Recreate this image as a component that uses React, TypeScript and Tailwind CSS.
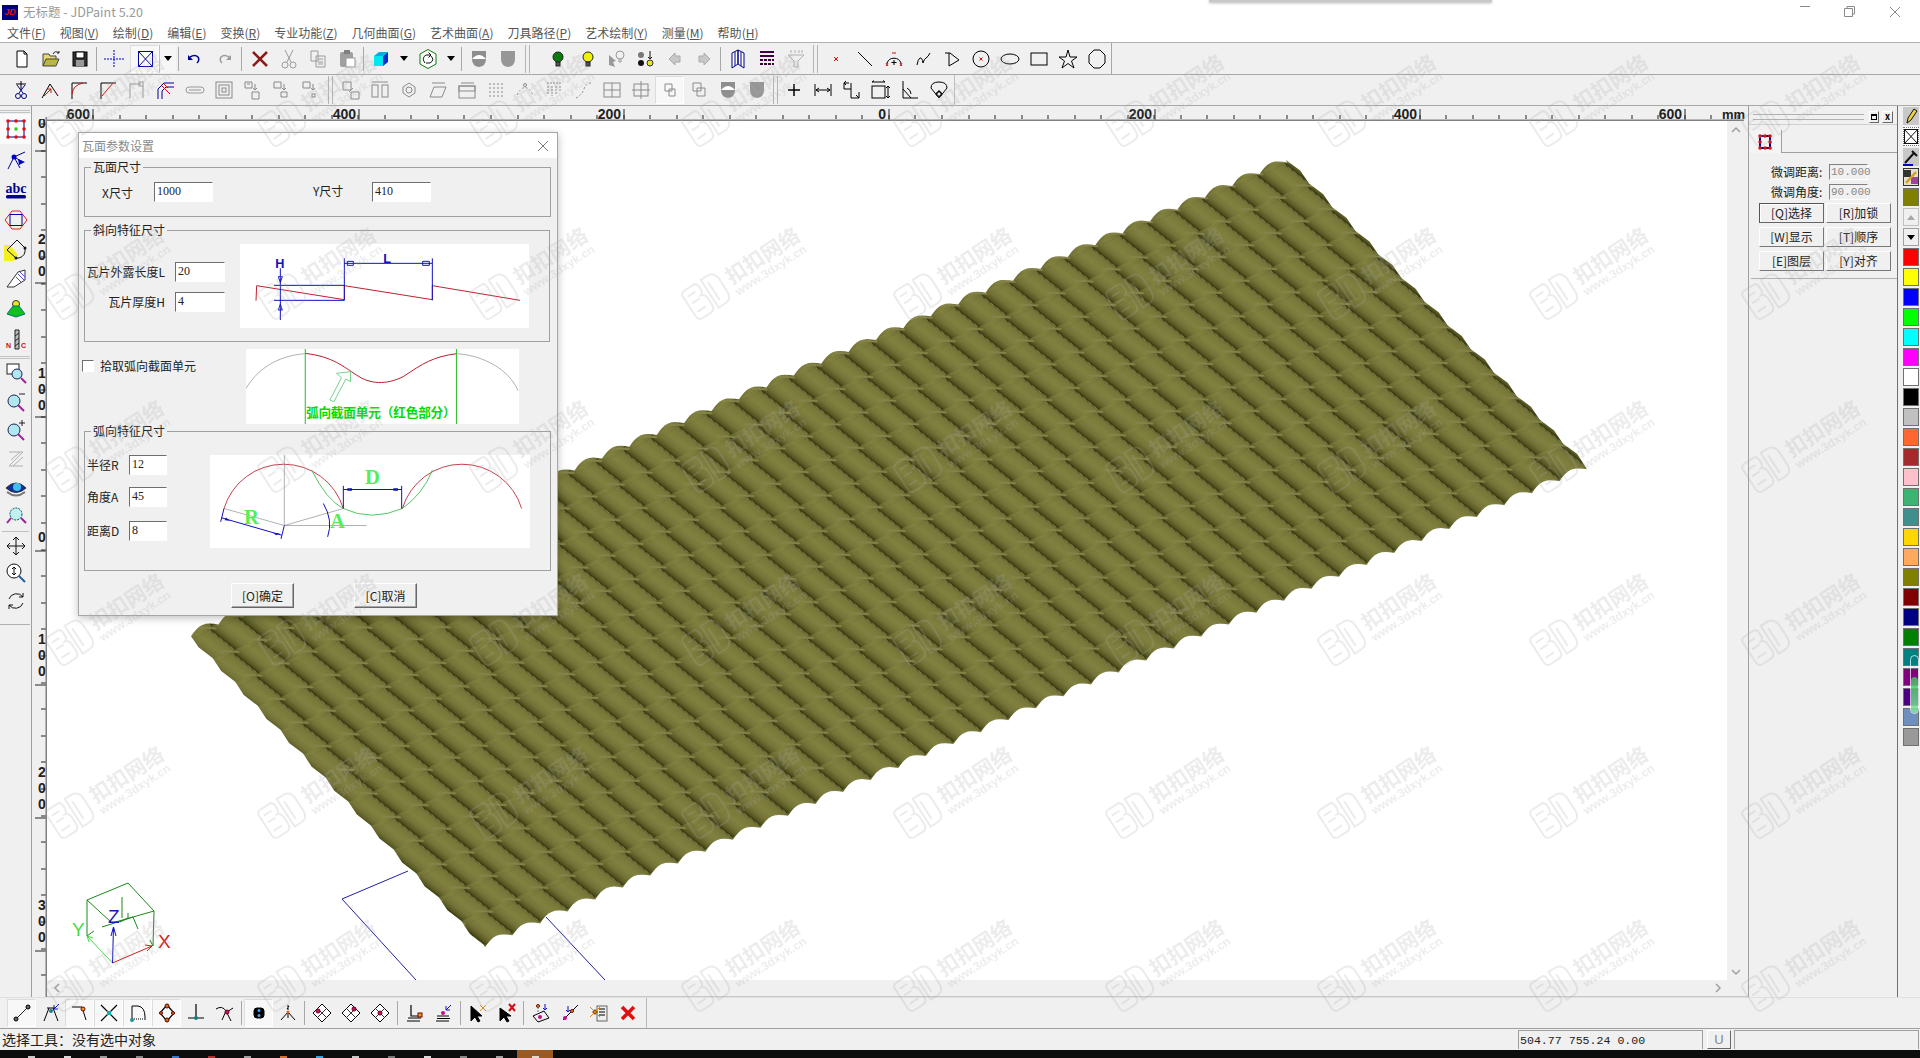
import type { ReactNode } from "react";

const cjk = "[font-family:'Noto_Sans_CJK_SC','Liberation_Sans',sans-serif]";

// ---------- helpers for toolbars ----------
const Ic = ({ children }: { children: ReactNode }) => (
  <svg width={20} height={20} viewBox="0 0 20 20" fill="none" stroke="#000" strokeWidth={1}>
    {children}
  </svg>
);

const T = ({ children, on, className = "" }: { children?: ReactNode; on?: boolean; className?: string }) => (
  <div
    className={`flex h-[28px] w-[29px] shrink-0 items-center justify-center ${
      on ? "border border-[#dcdcdc] border-r-white border-b-white bg-[#f8f8f8]" : ""
    } ${className}`}
  >
    <Ic>{children}</Ic>
  </div>
);

const Sep = ({ className = "mx-[2px]" }: { className?: string }) => (
  <div className={`h-[24px] w-px shrink-0 bg-[#a8a8a8] ${className}`} />
);

const Grip = ({ className = "w-[10px]" }: { className?: string }) => (
  <div className={`flex h-[28px] shrink-0 justify-center gap-[3px] ${className}`}>
    <div className="h-full w-px bg-[#b4b4b4]" />
    <div className="h-full w-px bg-[#b4b4b4]" />
  </div>
);

const Drop = ({ pressed }: { pressed?: boolean }) => (
  <div
    className={`flex h-[28px] w-[17px] shrink-0 items-center justify-center ${
      pressed ? "border-l border-[#c0c0c0] bg-[#f6f6f6]" : ""
    }`}
  >
    <div className="h-0 w-0 border-x-[4px] border-t-[5px] border-x-transparent border-t-black" />
  </div>
);

// ---------- icons ----------
const grey = "#9a9a9a";

const Bulb = ({ c }: { c: string }) => (
  <>
    <circle cx="10" cy="8" r="5" fill={c} stroke="#222" />
    <rect x="8" y="13" width="4" height="4" fill="#555" stroke="#222" />
  </>
);

const Diamond = ({ x, y }: { x: number; y: number }) => (
  <>
    <path d="M10 1L19 10L10 19L1 10Z" fill="#fff" />
    <path d="M5 5L15 15M15 5L5 15" stroke="#333" />
    <circle cx={x} cy={y} r="2" fill="#c0108a" stroke="#700" />
  </>
);

// ---------- tile surface geometry ----------
const TC = [1286, 160];
const RC = [1586, 467];
const BC = [484, 945];
const LC = [190, 634];
const WAVES = 40;
const ROWS = 13;

const longEdge = (a: number[], b: number[]) => {
  const out: string[] = [];
  const steps = WAVES * 8;
  for (let i = 0; i <= steps; i++) {
    const t = i / steps;
    const off = 2.5 - 6 * Math.abs(Math.sin(Math.PI * t * WAVES));
    out.push(`${(a[0] + (b[0] - a[0]) * t + off * 0.4).toFixed(1)} ${(a[1] + (b[1] - a[1]) * t + off * 0.92).toFixed(1)}`);
  }
  return out;
};

const shortEdge = (a: number[], b: number[], dir: number) => {
  const out: string[] = [];
  for (let i = 0; i < ROWS * 2; i++) {
    const t = i / (ROWS * 2);
    const off = i % 2 === 0 ? 0 : 3 * dir;
    out.push(`${(a[0] + (b[0] - a[0]) * t + off * 0.9).toFixed(1)} ${(a[1] + (b[1] - a[1]) * t - off * 0.4).toFixed(1)}`);
  }
  return out;
};

const tilePath =
  "M" + [...shortEdge(TC, RC, 1), ...longEdge(RC, BC), ...shortEdge(BC, LC, -1), ...longEdge(LC, TC)].join("L") + "Z";

const u = [(BC[0] - RC[0]) / WAVES, (BC[1] - RC[1]) / WAVES];
const v = [(RC[0] - TC[0]) / ROWS, (RC[1] - TC[1]) / ROWS];

const dashes = [-100, 0, 100]
  .flatMap((ox) => [0, 100].map((oy) => `M${38 + ox} ${oy - 13}L${-6 + ox} ${oy + 13}`))
  .join("");

const TileCanvas = () => (
  <svg className="absolute inset-0" width={1680} height={859} viewBox="47 121 1680 859">
    <defs>
      <linearGradient id="tileAcross" x1="0" y1="0" x2="1" y2="0">
        <stop offset="0" stopColor="#5c5c26" />
        <stop offset="0.07" stopColor="#767639" />
        <stop offset="0.42" stopColor="#81813f" />
        <stop offset="0.68" stopColor="#74743a" />
        <stop offset="0.88" stopColor="#585822" />
        <stop offset="1" stopColor="#30300c" />
      </linearGradient>
      <pattern
        id="tile"
        patternUnits="userSpaceOnUse"
        width="100"
        height="100"
        patternTransform={`matrix(${u[0] / 100} ${u[1] / 100} ${v[0] / 100} ${v[1] / 100} ${TC[0]} ${TC[1]})`}
      >
        <g transform="matrix(1 0 -0.16 1 16 0)">
          <rect x="-100" width="100" height="100" fill="url(#tileAcross)" />
          <rect x="0" width="100" height="100" fill="url(#tileAcross)" />
          <rect x="100" width="100" height="100" fill="url(#tileAcross)" />
        </g>
        <path d="M10 6Q55 22 100 8" stroke="#5e5e2a" strokeOpacity="0.25" strokeWidth="3" fill="none" />
        <path d={dashes} stroke="#84844a" strokeWidth="8" fill="none" />
      </pattern>
    </defs>
    <path d="M408 871L342 899L416 980M546 917L605 980" stroke="#2020a0" fill="none" />
    <path d={tilePath} fill="url(#tile)" />
    {/* axis widget */}
    <g fill="none" stroke="#1a8a1a">
      <path d="M128 883L87 900L112 923L154 911Z" />
      <path d="M87 900L87 936M154 911L153 946M122 897L122 918M128 913L128 918L120 922M102 927L133 917L138 929M150 940L153 946M87 936L94 931" />
    </g>
    <path d="M112.5 963L87 936M87 936L93 938M87 936L89 942" stroke="#44dd44" fill="none" />
    <path d="M112.5 963L152 946M152 946L145 945M152 946L147 951" stroke="#d01818" fill="none" />
    <path d="M112.5 963L113.5 927M113.5 927L111 936M113.5 927L116 936" stroke="#1010c0" fill="none" />
    <text x="108" y="923" fontSize="19" fill="#1818b0" fontFamily="Liberation Sans">Z</text>
    <text x="72" y="936" fontSize="19" fill="#44dd44" fontFamily="Liberation Sans">Y</text>
    <text x="158" y="948" fontSize="19" fill="#d82020" fontFamily="Liberation Sans">X</text>
  </svg>
);

// ---------- dialog widgets ----------
const Field = ({ value, w }: { value: string; w: string }) => (
  <div
    className={`flex h-[20px] shrink-0 items-start border border-t-[#6e6e6e] border-l-[#6e6e6e] border-r-white border-b-white bg-white pl-[2px] text-[12px] leading-[16px] text-[#222] [font-family:'Liberation_Serif',serif] ${w}`}
  >
    {value}
  </div>
);

const Group = ({ title, className, children }: { title: string; className: string; children: ReactNode }) => (
  <div className={`relative ml-[5px] border border-[#a0a0a0] ${className}`}>
    <span className="absolute -top-[9px] left-[6px] bg-[#f0f0f0] px-[2px] text-[12px] leading-[16px] text-[#222]">{title}</span>
    {children}
  </div>
);

const DlgButton = ({ label }: { label: string }) => (
  <div className="flex h-[25px] w-[63px] items-center justify-center border border-t-white border-l-white border-r-[#666] border-b-[#666] text-[12px] text-[#222] shadow-[inset_-1px_-1px_0_#a8a8a8]">
    {label}
  </div>
);

const Dialog = () => (
  <div className={`absolute left-[31px] top-[11px] flex h-[484px] w-[480px] flex-col border border-[#a6a6a6] bg-[#f0f0f0] shadow-[0_2px_8px_rgba(0,0,0,0.25)] ${cjk}`}>
    <div className="flex h-[25px] shrink-0 items-center justify-between bg-white pl-[3px] pr-[8px]">
      <span className="text-[12px] text-[#8a8a8a]">瓦面参数设置</span>
      <svg width={12} height={12} viewBox="0 0 12 12" stroke="#777" fill="none">
        <path d="M1 1L11 11M11 1L1 11" />
      </svg>
    </div>
    <Group title="瓦面尺寸" className="mt-[9px] h-[50px] w-[467px]">
      <div className="flex pt-[14px] text-[12px] text-[#222]">
        <span className="box-content w-[52px] pl-[17px] leading-[22px]">X尺寸</span>
        <Field value="1000" w="w-[59px]" />
        <span className="ml-[100px] w-[59px] leading-[18px]">Y尺寸</span>
        <Field value="410" w="w-[59px]" />
      </div>
    </Group>
    <Group title="斜向特征尺寸" className="mt-[13px] h-[112px] w-[466px]">
      <div className="flex pt-[13px]">
        <div className="flex w-[155px] shrink-0 flex-col gap-[10px] pr-[15px] pt-[18px] text-[12px] text-[#222]">
          <div className="flex items-center justify-end gap-[10px]">
            瓦片外露长度L
            <Field value="20" w="w-[50px]" />
          </div>
          <div className="flex items-center justify-end gap-[10px]">
            瓦片厚度H
            <Field value="4" w="w-[50px]" />
          </div>
        </div>
        <svg className="bg-white" width={289} height={84} viewBox="510 357 867 252" fill="none">
          <path d="M558 527L560 482L823 524L823 482L1087 524L1087 482L1350 526" stroke="#c02030" strokeWidth="3" />
          <path
            d="M631 430V585M612 481H823M612 526H823M823 400V526M1087 400V526M823 415H1087"
            stroke="#1010c0"
            strokeWidth="3"
          />
          <path d="M625 455H637L631 472ZM625 555H637L631 538ZM832 409H850V421H832ZM1058 409H1078V421H1058Z" stroke="#1010c0" strokeWidth="3" />
          <text x="616" y="428" fontSize="38" fontWeight="700" fill="#1010c0" fontFamily="Liberation Sans">H</text>
          <text x="940" y="414" fontSize="38" fontWeight="700" fill="#1010c0" fontFamily="Liberation Sans">L</text>
        </svg>
      </div>
    </Group>
    <div className="ml-[3px] mt-[7px] flex h-[75px]">
      <div className="flex h-fit w-[164px] shrink-0 items-center gap-[6px] pt-[8px] text-[12px] text-[#222]">
        <div className="h-[12px] w-[12px] border border-t-[#6e6e6e] border-l-[#6e6e6e] border-r-white border-b-white bg-white" />
        拾取弧向截面单元
      </div>
      <svg className="bg-white" width={273} height={75} viewBox="528 672 820 225" fill="none">
        <path d="M528 790C570 720 640 690 706 686M1160 686C1240 690 1320 735 1345 797" stroke="#8a8a8a" strokeWidth="2" />
        <path d="M706 685C790 695 820 725 860 750C900 778 950 780 1000 755C1060 715 1090 695 1160 686" stroke="#b81c2c" strokeWidth="3" />
        <path d="M706 672V897M1160 672V897" stroke="#22bb22" strokeWidth="3" />
        <path d="M780 825L815 758L800 745L842 740L842 770L828 762L792 830Z" stroke="#33bb55" strokeWidth="2" />
        <text x="708" y="875" fontSize="38" fontWeight="700" fill="#00dd00" textLength="450" fontFamily="Noto Sans CJK SC">弧向截面单元（红色部分）</text>
      </svg>
    </div>
    <Group title="弧向特征尺寸" className="mt-[7px] h-[140px] w-[467px]">
      <div className="flex pt-[23px]">
        <div className="flex w-[125px] shrink-0 flex-col pl-[2px] text-[12px] text-[#222]">
          <div className="flex items-center">
            <span className="w-[42px]">半径R</span>
            <Field value="12" w="w-[38px]" />
          </div>
          <div className="mt-[12px] flex items-center">
            <span className="w-[42px]">角度A</span>
            <Field value="45" w="w-[38px]" />
          </div>
          <div className="mt-[14px] flex items-center">
            <span className="w-[42px]">距离D</span>
            <Field value="8" w="w-[38px]" />
          </div>
        </div>
        <svg className="bg-white" width={320} height={93} viewBox="420 105 960 278" fill="none">
          <path d="M643 105V316M643 316L462 265M643 316L820 265M643 316H890" stroke="#8a8a8a" strokeWidth="2" />
          <path d="M462 265A187 187 0 0 1 820 265M997 265A187 187 0 0 1 1355 265" stroke="#b81c2c" strokeWidth="2.5" />
          <path d="M725 150Q770 240 820 265Q905 305 997 265Q1060 220 1087 150" stroke="#33bb44" strokeWidth="2.5" />
          <path
            d="M462 265L452 305M643 316L633 356M455 293L635 345M820 197V265M995 197V265M820 208H995M760 250Q790 300 773 350"
            stroke="#1010c0"
            strokeWidth="3"
          />
          <path d="M832 204H846V212H832ZM970 204H984V212H970ZM468 292L480 302L464 300ZM610 338L630 340L618 345Z" fill="#1010c0" />
          <text x="522" y="312" fontSize="62" fontWeight="700" fill="#55ee55" fontFamily="Liberation Serif">R</text>
          <text x="885" y="192" fontSize="62" fontWeight="700" fill="#55ee55" fontFamily="Liberation Serif">D</text>
          <text x="780" y="324" fontSize="62" fontWeight="700" fill="#55ee55" fontFamily="Liberation Serif">A</text>
        </svg>
      </div>
    </Group>
    <div className="ml-[152px] mt-[12px] flex gap-[60px]">
      <DlgButton label="[O]确定" />
      <DlgButton label="[C]取消" />
    </div>
  </div>
);

// ---------- rulers ----------
const hLabels = [
  { x: 93, t: "600" },
  { x: 359, t: "400" },
  { x: 624, t: "200" },
  { x: 889, t: "0" },
  { x: 1155, t: "200" },
  { x: 1420, t: "400" },
  { x: 1685, t: "600" }
];
const hTicks = Array.from({ length: 66 }, (_, i) => 66.5 + i * 26.53);

const HRuler = () => (
  <svg className="block shrink-0" width={1701} height={15} viewBox="47 106 1701 15">
    {hTicks.map((x) => (
      <path key={x} d={`M${Math.round(x)} 115V119`} stroke="#222" />
    ))}
    {hLabels.map((l) => (
      <g key={l.x}>
        <path d={`M${l.x} 109V120`} stroke="#222" />
        <text x={l.x - 3} y="119" textAnchor="end" fontSize="14" fontWeight="700" fill="#222" fontFamily="Liberation Sans">{l.t}</text>
      </g>
    ))}
    <text x="1722" y="119" fontSize="13" fontWeight="700" fill="#222" fontFamily="Liberation Sans">mm</text>
    <path d="M47 120.5H1744" stroke="#808080" strokeWidth="2" />
  </svg>
);

const vMajors = [151, 283, 417, 551, 685, 818, 951];
const vDigits = [
  { y: 128, t: "0" },
  { y: 144, t: "0" },
  { y: 244, t: "2" },
  { y: 260, t: "0" },
  { y: 276, t: "0" },
  { y: 378, t: "1" },
  { y: 394, t: "0" },
  { y: 410, t: "0" },
  { y: 542, t: "0" },
  { y: 644, t: "1" },
  { y: 660, t: "0" },
  { y: 676, t: "0" },
  { y: 777, t: "2" },
  { y: 793, t: "0" },
  { y: 809, t: "0" },
  { y: 910, t: "3" },
  { y: 926, t: "0" },
  { y: 942, t: "0" }
];
const vTicks = Array.from({ length: 34 }, (_, i) => 124 + i * 26.6);

const VRuler = () => (
  <svg className="block shrink-0" width={15} height={891} viewBox="32 106 15 891">
    {vTicks.map((y) => (
      <path key={y} d={`M41 ${Math.round(y)}H46`} stroke="#222" />
    ))}
    {vMajors.map((y) => (
      <path key={y} d={`M35 ${y}H46`} stroke="#222" />
    ))}
    {vDigits.map((d) => (
      <text key={d.y} x="42" y={d.y} textAnchor="middle" fontSize="14" fontWeight="700" fill="#222" fontFamily="Liberation Sans">{d.t}</text>
    ))}
    {/* the topmost digit is cut off by the ruler's corner */}
    <rect x="32" y="106" width="15" height="13" fill="#f0f0f0" />
    <path d="M46.5 117V997" stroke="#808080" strokeWidth="2" />
  </svg>
);

// ---------- left toolbar ----------
const L = ({ children, h, on }: { children: ReactNode; h: string; on?: boolean }) => (
  <div className={`flex shrink-0 items-center justify-center ${h} ${on ? "bg-[#fafafa]" : ""}`}>
    <svg width={24} height={24} viewBox="0 0 24 24" fill="none" stroke="#000">
      {children}
    </svg>
  </div>
);

const LeftBar = () => (
  <div className="flex w-[32px] shrink-0 flex-col border-r border-[#a0a0a0]">
    <div className="mt-[4px] h-[3px] w-[30px] border-t border-b border-[#c4c4c4]" />
    <div className="h-[1px]" />
    <L h="h-[30px]" on>
      <rect x="4" y="4" width="16" height="16" stroke="#000080" />
      <path d="M4 4h.1M12 4h.1M20 4h.1M4 12h.1M20 12h.1M4 20h.1M12 20h.1M20 20h.1" stroke="#e01010" strokeWidth="3.5" strokeLinecap="round" />
      <rect x="10.5" y="10.5" width="3" height="3" fill="#20d020" stroke="none" />
    </L>
    <L h="h-[31px]">
      <path d="M4 21L10 9L21 4M10 9L19 14M10 9L16 20" stroke="#000090" />
      <circle cx="10" cy="9" r="2.5" fill="#0000c0" stroke="none" />
      <path d="M14 11L21 14L15 17Z" fill="#0000c0" stroke="none" />
    </L>
    <L h="h-[30px]">
      <text x="12" y="15" textAnchor="middle" fontSize="14" fontWeight="700" fill="#000090" stroke="none" fontFamily="Liberation Serif">abc</text>
      <rect x="2" y="17" width="20" height="3.5" rx="1.5" fill="#000090" stroke="none" />
    </L>
    <L h="h-[29px]">
      <path d="M8 3H16L23 12L16 21H8L1 12Z" stroke="#e02020" />
      <rect x="6" y="6.5" width="12" height="11" stroke="#0000a0" />
    </L>
    <L h="h-[29px]">
      <path d="M0 8H6L14 18L10 24H0Z" fill="#f4f020" stroke="none" />
      <path d="M3 13L13 3L21 11Q22 19 15 21H12Z" stroke="#111" />
      <circle cx="21" cy="11" r="1.5" fill="#111" stroke="none" />
      <circle cx="12" cy="21" r="1.5" fill="#111" stroke="none" />
    </L>
    <L h="h-[30px]">
      <path d="M3 21L14 6L21 4V14L10 21Z" fill="#fff" stroke="#333" />
      <path d="M14 8L20 14M16 6L21 11M12 11L18 17" stroke="#5050c0" />
    </L>
    <L h="h-[32px]">
      <circle cx="12" cy="7" r="3.5" fill="#e8e820" stroke="#333" />
      <path d="M9 9H15L21 17L12 20L3 17Z" fill="#10c020" stroke="#077" />
    </L>
    <L h="h-[29px]">
      <path d="M11 2H15V21H11Z" fill="#bbb" stroke="#222" />
      <path d="M11 8L15 5M11 13L15 10M11 18L15 15" stroke="#222" />
      <text x="2" y="20" fontSize="7" fontWeight="700" fill="#c01010" stroke="none" fontFamily="Liberation Sans">N</text>
      <text x="17" y="20" fontSize="7" fontWeight="700" fill="#c01010" stroke="none" fontFamily="Liberation Sans">C</text>
    </L>
    <div className="mt-[2px] h-[3px] w-[30px] border-t border-b border-[#c4c4c4]" />
    <L h="h-[28px]">
      <rect x="3" y="3" width="12" height="10" fill="#fff" stroke="#222" />
      <circle cx="13" cy="13" r="5" fill="#b0e8f0" stroke="#225" />
      <path d="M17 17L22 22" stroke="#a020a0" strokeWidth="2" />
    </L>
    <L h="h-[29px]">
      <circle cx="10" cy="11" r="6" fill="#b0e8f0" stroke="#225" />
      <path d="M14 15L20 21" stroke="#a020a0" strokeWidth="2" />
      <path d="M15 4H21" stroke="#222" />
    </L>
    <L h="h-[28px]">
      <circle cx="10" cy="12" r="6" fill="#b0e8f0" stroke="#225" />
      <path d="M14 16L20 22" stroke="#a020a0" strokeWidth="2" />
      <path d="M18 2V8M15 5H21" stroke="#222" />
    </L>
    <L h="h-[29px]">
      <path d="M5 5H19L5 19H19M7 13L16 5M9 19L19 10" stroke="#b0b0b0" />
    </L>
    <L h="h-[28px]">
      <path d="M2 13Q12 3 22 13Q12 22 2 13Z" fill="#1030a0" stroke="#333" />
      <circle cx="13" cy="12" r="4" fill="#40c0f0" stroke="none" />
      <path d="M3 17Q12 24 21 17" stroke="#777" strokeWidth="2" />
    </L>
    <L h="h-[28px]">
      <circle cx="12" cy="11" r="6" fill="#c0f0f0" stroke="#055" strokeDasharray="2 1" />
      <path d="M17 15L22 20M7 15L3 20" stroke="#a020a0" strokeWidth="2" />
    </L>
    <div className="mx-[2px] mt-[2px] h-px bg-[#c0c0c0]" />
    <L h="h-[27px]">
      <path d="M12 3V21M3 12H21M12 3L9 6M12 3L15 6M12 21L9 18M12 21L15 18M3 12L6 9M3 12L6 15M21 12L18 9M21 12L18 15" stroke="#111" />
    </L>
    <L h="h-[28px]">
      <circle cx="10" cy="10" r="7" fill="#fff" stroke="#111" />
      <path d="M10 6V14M8 8L10 6L12 8M8 12L10 14L12 12" stroke="#111" />
      <path d="M15 15L21 21" stroke="#2060a0" strokeWidth="2" />
    </L>
    <L h="h-[28px]">
      <path d="M5 10A8 8 0 0 1 19 8M19 14A8 8 0 0 1 5 16M19 4V8H15M5 20V16H9" stroke="#111" />
    </L>
    <div className="mt-[9px] h-px w-[30px] bg-[#b0b0b0]" />
  </div>
);

// ---------- right panel ----------
const colors = [
  "bg-[#ff0000]", "bg-[#ffff00]", "bg-[#0000ff]", "bg-[#00ff00]", "bg-[#00ffff]",
  "bg-[#ff00ff]", "bg-[#ffffff]", "bg-[#000000]", "bg-[#c0c0c0]", "bg-[#ff6633]",
  "bg-[#a52a2a]", "bg-[#ffc0cb]", "bg-[#3cb371]", "bg-[#408f8f]", "bg-[#ffd700]",
  "bg-[#ffaa60]", "bg-[#808000]", "bg-[#800000]", "bg-[#000080]", "bg-[#008000]",
  "bg-[#008080]", "bg-[#800080]", "bg-[#4b0082]", "bg-[#6f8fbf]", "bg-[#999999]"
];

const Swatch = ({ c }: { c: string }) => (
  <div className={`h-[18px] w-[16px] shrink-0 border border-[#707070] ${c}`} />
);

const ColorStrip = () => (
  <div className="relative ml-[5px] flex w-[16px] shrink-0 flex-col gap-[2px] pt-[1px]">
    <div className="flex h-[18px] items-center justify-center bg-[#c8c8c8]">
      <svg width={14} height={16} viewBox="0 0 14 16" fill="none">
        <path d="M3 15L4 10L10 1L13 3L7 12Z" fill="#f0d040" stroke="#111" />
      </svg>
    </div>
    <div className="flex h-[19px] items-center justify-center border border-dotted border-[#777] bg-white">
      <svg width={14} height={15} viewBox="0 0 14 15" fill="none" stroke="#111">
        <rect x="0.5" y="0.5" width="13" height="14" />
        <path d="M0 0L14 15M14 0L0 15" />
      </svg>
    </div>
    <div className="flex h-[18px] items-center justify-center bg-[#c8c8c8]">
      <svg width={16} height={17} viewBox="0 0 16 17" fill="none">
        <path d="M2 14L11 4M9 2L14 7" stroke="#111" strokeWidth="2" />
        <path d="M0 16H10" stroke="#0000d0" strokeWidth="2" />
      </svg>
    </div>
    <div className="flex h-[18px] items-center justify-center border border-[#333] bg-[#e8e0d0]">
      <svg width={14} height={14} viewBox="0 0 14 14">
        <rect x="0" y="0" width="7" height="7" fill="#333" />
        <rect x="7" y="7" width="7" height="7" fill="#a040a0" />
        <path d="M2 13L12 2" stroke="#d0a020" strokeWidth="2.5" />
      </svg>
    </div>
    <Swatch c="bg-[#808000]" />
    <div className="flex h-[18px] items-center justify-center border border-[#c0c0c0]">
      <div className="h-0 w-0 border-x-[4px] border-b-[5px] border-x-transparent border-b-[#a8a8a8]" />
    </div>
    <div className="flex h-[18px] items-center justify-center border border-[#a0a0a0]">
      <div className="h-0 w-0 border-x-[4px] border-t-[5px] border-x-transparent border-t-black" />
    </div>
    {colors.map((c) => (
      <Swatch key={c} c={c} />
    ))}
    <div className="absolute left-[7px] top-[549px] flex h-[59px] w-[9px] items-end rounded-full border border-white/70">
      <div className="h-[36px] w-full rounded-full bg-gradient-to-b from-[#3fbf5f] to-[#7fe89f] opacity-85" />
    </div>
  </div>
);

const PanelInput = ({ value }: { value: string }) => (
  <div className="h-[16px] w-[39px] border border-t-[#808080] border-l-[#808080] border-r-white border-b-white pl-[1px] text-[11px] leading-[14px] text-[#888] [font-family:'Liberation_Mono',monospace]">
    {value}
  </div>
);

const PanelButton = ({ label, strong }: { label: string; strong?: boolean }) => (
  <div
    className={`flex h-[20px] items-center justify-center border text-[12px] text-[#222] ${
      strong
        ? "border-[#666] border-t-[#555] border-l-[#555] shadow-[inset_1px_1px_0_#fff]"
        : "border-t-white border-l-white border-r-[#777] border-b-[#777]"
    }`}
  >
    {label}
  </div>
);

const RightPanel = () => (
  <div className={`flex w-[172px] shrink-0 ${cjk}`}>
    <div className="flex w-[150px] shrink-0 flex-col border-x border-l-[#a0a0a0] border-r-[#707070]">
      <div className="flex h-[19px] items-center border-b border-[#d0d0d0] pl-[4px] pt-[3px]">
        <div className="h-[6px] w-[111px] border-y border-[#b0b0b0]" />
        <div className="ml-[5px] flex h-[12px] w-[10px] items-center justify-center border border-t-white border-l-white border-r-[#666] border-b-[#666]">
          <div className="h-[6px] w-[6px] border border-t-2 border-black" />
        </div>
        <div className="ml-[3px] flex h-[12px] w-[11px] items-center justify-center border border-t-white border-l-white border-r-[#666] border-b-[#666] text-[9px] font-bold leading-none text-black">x</div>
      </div>
      <div className="mt-[5px] flex h-[23px]">
        <div className="flex w-[33px] items-center justify-center border-r border-[#a0a0a0] bg-[#f4f4f4]">
          <svg width={14} height={16} viewBox="0 0 14 16" fill="none">
            <rect x="2" y="2" width="10" height="12" stroke="#000080" strokeWidth="2" />
            <path d="M2 2h.1M7 2h.1M12 2h.1M2 8h.1M12 8h.1M2 14h.1M7 14h.1M12 14h.1" stroke="#e01010" strokeWidth="3.5" strokeLinecap="round" />
          </svg>
        </div>
        <div className="flex-1 border-b border-[#a0a0a0]" />
      </div>
      <div className="mt-[10px] flex flex-col gap-[3px] pl-[22px] text-[12px] text-[#222]">
        <div className="flex h-[17px] items-center gap-[6px]">
          <span className="w-[52px]">微调距离:</span>
          <PanelInput value="10.000" />
        </div>
        <div className="flex h-[17px] items-center gap-[6px]">
          <span className="w-[52px]">微调角度:</span>
          <PanelInput value="90.000" />
        </div>
      </div>
      <div className="ml-[10px] mt-[3px] grid w-[132px] grid-cols-2 gap-x-[2px] gap-y-[4px]">
        <PanelButton label="[Q]选择" strong />
        <PanelButton label="[R]加锁" />
        <PanelButton label="[W]显示" />
        <PanelButton label="[T]顺序" />
        <PanelButton label="[E]图层" />
        <PanelButton label="[Y]对齐" />
      </div>
      <div className="ml-[2px] mt-[7px] h-px bg-[#b0b0b0]" />
    </div>
    <ColorStrip />
  </div>
);

// ---------- watermark: logo plus site name, faint and tilted, all over the page ----------
const Watermark = () => (
  <div className="flex -rotate-[33deg] items-center gap-[3px] text-[rgba(170,170,170,0.22)]">
    <svg width={46} height={42} viewBox="0 0 92 84" fill="none" stroke="rgba(170,170,170,0.22)" strokeWidth="4">
      <path d="M4 14Q4 6 14 6H34Q42 6 42 16V22Q42 30 36 32Q44 34 44 44V60Q44 72 32 72H14Q4 72 4 62Z" />
      <path d="M12 20H30M12 36H30M12 56H32" />
      <path d="M52 6H70Q84 10 84 26V54Q84 70 70 72H52Z" />
      <path d="M62 18V60" />
    </svg>
    <span className="flex flex-col text-[12px] font-bold leading-[13px] [font-family:'Liberation_Sans',sans-serif]">
      <span className={`text-[21px] leading-[24px] ${cjk}`}>扣扣网络</span>
      www.3dxyk.cn
    </span>
  </div>
);

const Watermarks = () => (
  <div className="pointer-events-none absolute inset-0 grid grid-cols-[repeat(9,212px)] auto-rows-[173px] overflow-hidden pl-[2px] pt-[13px]">
    {Array.from({ length: 54 }, (_, i) => (
      <div key={i} className="flex items-center justify-center">
        <Watermark />
      </div>
    ))}
  </div>
);

const menus: [string, string][] = [
  ["文件", "F"], ["视图", "V"], ["绘制", "D"], ["编辑", "E"], ["变换", "R"], ["专业功能", "Z"],
  ["几何曲面", "G"], ["艺术曲面", "A"], ["刀具路径", "P"], ["艺术绘制", "Y"], ["测量", "M"], ["帮助", "H"]
];

const taskTips = ["bg-[#c8c8c8]", "bg-[#d8d8d8]", "bg-[#9a9a9a]", "bg-[#888888]", "bg-[#3a78c8]", "bg-[#b03030]", "bg-[#a0a0a0]", "bg-[#d07030]", "bg-[#3aa0d8]", "bg-[#c8c8c8]", "bg-[#777777]", "bg-[#d8d8d8]", "bg-[#888888]", "bg-[#a0a0a0]"];

export default function App() {
  return (
    <div className={`relative flex h-[1058px] w-[1920px] flex-col overflow-hidden bg-[#f0f0f0] ${cjk}`}>
      {/* title bar */}
      <div className="flex h-[24px] shrink-0 items-center bg-white pl-[2px] pr-[3px]">
        <div className="flex h-[15px] w-[16px] items-center justify-center bg-[#000080] text-[9px] font-bold italic leading-none text-[#e01010] [font-family:'Liberation_Sans',sans-serif]">JD</div>
        <span className="ml-[5px] text-[12.5px] text-[#9a9a9a]">无标题 - JDPaint 5.20</span>
        <div className="ml-auto flex">
          <div className="flex w-[45px] justify-center">
            <div className="h-px w-[10px] bg-[#8a8a8a]" />
          </div>
          <div className="flex w-[45px] justify-center">
            <svg width={11} height={11} viewBox="0 0 11 11" fill="none" stroke="#8a8a8a">
              <path d="M3 2.5V0.5H10.5V8H8.5M0.5 2.5H8.5V10.5H0.5Z" />
            </svg>
          </div>
          <div className="flex w-[45px] justify-center">
            <svg width={12} height={12} viewBox="0 0 12 12" fill="none" stroke="#8a8a8a">
              <path d="M1 1L11 11M11 1L1 11" />
            </svg>
          </div>
        </div>
      </div>
      {/* menu */}
      <div className="flex h-[19px] shrink-0 items-start gap-[14px] border-b border-[#b0b0b0] bg-white pl-[7px] text-[12px] leading-[18px] text-[#555]">
        {menus.map(([name, key]) => (
          <span key={key}>
            {name}(<u>{key}</u>)
          </span>
        ))}
      </div>
      {/* toolbar 1 */}
      <div className="flex h-[32px] shrink-0 items-center border-b border-[#a8a8a8] pl-[7px]">
        <T><path d="M5 2H12L15 5V18H5Z" fill="#fff" /><path d="M12 2V5H15" /></T>
        <T><path d="M2 17V5H8L9 7H15V10" fill="#e8d870" stroke="#444" /><path d="M2 17L5 10H18L15 17Z" fill="#b8b840" stroke="#444" /><path d="M12 5Q14 1 18 4M18 4V2M18 4H16" stroke="#222" /></T>
        <T><rect x="3" y="3" width="14" height="14" fill="#333" /><rect x="6" y="3" width="8" height="6" fill="#fff" /><rect x="6" y="11" width="8" height="6" fill="#999" stroke="none" /></T>
        <Sep />
        <T><path d="M0 10H20M10 1V19" stroke="#0000c8" strokeDasharray="2 1" /></T>
        <T on className="ml-[2px]"><rect x="3.5" y="2.5" width="14" height="15" fill="#fff" stroke="#0000a0" /><path d="M4 3L17 17M17 3L4 17" stroke="#0000a0" /></T>
        <Drop pressed />
        <Sep />
        <T className="-ml-[2px]"><path d="M6 8Q11 5 14 8Q16 11 13 14" stroke="#000090" strokeWidth="1.5" /><path d="M4 6V11H9Z" fill="#000090" stroke="none" /></T>
        <T className="ml-[2px]"><path d="M14 8Q9 5 6 8Q4 11 7 14" stroke={grey} strokeWidth="1.5" /><path d="M16 6V11H11Z" fill={grey} stroke="none" /></T>
        <Sep />
        <T className="ml-[1px]"><path d="M3 3L17 17M17 3L3 17" stroke="#8b1a1a" strokeWidth="2.5" /></T>
        <T><path d="M6 1L12 13M14 1L8 13" stroke={grey} /><circle cx="6" cy="16" r="3" stroke={grey} /><circle cx="14" cy="16" r="3" stroke={grey} /></T>
        <T><path d="M3 2H10V12H3ZM8 7H17V18H8Z" fill="#f0f0f0" stroke={grey} /><path d="M10 10H15M10 13H15M10 15H15" stroke={grey} /></T>
        <T><rect x="3" y="3" width="13" height="15" rx="2" fill="#a0a0a0" stroke="none" /><rect x="7" y="1" width="6" height="4" fill="#808080" stroke="none" /><rect x="9" y="9" width="9" height="9" fill="#fff" stroke={grey} /></T>
        <Sep />
        <T><path d="M3 7H12V17H3Z" fill="#00e8f0" stroke="none" /><path d="M12 7L17 3V13L12 17Z" fill="#0030d0" stroke="none" /><path d="M3 7L8 3H17L12 7Z" fill="#00b0e0" stroke="none" /></T>
        <Drop />
        <T className="ml-[1px]"><path d="M10 0.5L18 5V15L10 19.5L2 15V5Z" fill="#fff" stroke="#0a7a0a" /><path d="M7 14Q3 9 8 6H13M13 6L10.5 3.5M13 6L10.5 8.5M13 7Q17 11 12 14H8" stroke="#111" /></T>
        <Drop />
        <Sep />
        <T><path d="M3 2H17V10Q17 17 10 18Q3 17 3 10Z" fill="#8e8e8e" stroke="none" /><path d="M3 10Q10 2 17 10Z" fill="#fff" stroke="none" /></T>
        <T><path d="M3 2H17V10Q17 17 10 18Q3 17 3 10Z" fill="#969696" stroke="none" /></T>
        <Grip />
        <T className="ml-[11px]"><Bulb c="#0a7a0a" /></T>
        <T className="ml-[1px]"><Bulb c="#f0f010" /></T>
        <T><path d="M2 6L9 12L6 13L8 18L2 16Z" fill="#999" stroke="none" /><circle cx="13" cy="6" r="4" stroke={grey} /><path d="M12 10V13H14V10" stroke={grey} /></T>
        <T><circle cx="5" cy="6" r="3" fill="#777" stroke="none" /><circle cx="5" cy="14" r="3" fill="#111" stroke="none" /><circle cx="14" cy="14" r="3" fill="#e8e820" stroke="#333" /><path d="M14 2V10M12 8L14 10L16 8" stroke="#111" /></T>
        <T><path d="M4 10L10 4V7H15V13H10V16Z" fill="#c8c8c8" stroke="#aaa" /></T>
        <T><path d="M16 10L10 4V7H5V13H10V16Z" fill="#c8c8c8" stroke="#aaa" /></T>
        <Sep />
        <T><path d="M4 4L10 1V15L4 19ZM10 1L16 4V19L10 15ZM7 3V17M13 3V17" stroke="#000080" fill="#fff" /></T>
        <T><path d="M3 3H17M3 7H17" stroke="#400040" strokeWidth="2" /><path d="M3 11H17M3 15H17" stroke="#400040" strokeWidth="2" strokeDasharray="3 1" /></T>
        <T><path d="M5 1V4M9 1V4M13 1V4M16 1V4M2 6H18L12 12V18H8V12Z" stroke="#b0b0b0" /></T>
        <Grip />
        <T className="ml-[1px]"><path d="M8 8L12 12M12 8L8 12" stroke="#d01010" /></T>
        <T><path d="M3 3L17 17" /></T>
        <T><path d="M3 14A7.5 7.5 0 0 1 17 14M10 11V16M7.5 13.5H12.5" /><path d="M2 14L4 17M4 14L2 17M8 4H12M16 14L18 17M18 14L16 17" stroke="#c01010" /></T>
        <T><path d="M4 16Q5 10 7 9T10 14Q11 10 13 9T17 4" /></T>
        <T><path d="M3 4H8L17 11L7 17V4" /></T>
        <T><circle cx="10" cy="10" r="8" /><path d="M8.5 8.5L11.5 11.5M11.5 8.5L8.5 11.5" stroke="#d01010" /></T>
        <T><ellipse cx="10" cy="10" rx="9" ry="5" /></T>
        <T><rect x="2" y="4" width="16" height="12" /><path d="M2 4h.1M18 16h.1" stroke="#c01010" strokeWidth="2.5" /></T>
        <T><path d="M10 1L12 8H19L13.5 12L16 19L10 14.5L4 19L6.5 12L1 8H8Z" /></T>
        <T><path d="M7 1H13L18 6V14L13 19H7L2 14V6Z" /></T>
        <div className="h-[31px] w-px self-start bg-[#a8a8a8]" />
      </div>
      {/* toolbar 2 */}
      <div className="flex h-[31px] shrink-0 items-center border-b border-[#a8a8a8] pl-[6px]">
        <T><path d="M5 4H15M10 1V10" /><path d="M6 5L12 13M14 5L8 13" stroke="#000080" /><circle cx="7" cy="16" r="2.5" stroke="#000080" /><circle cx="13" cy="16" r="2.5" stroke="#000080" /></T>
        <T><path d="M2 18L10 4L18 16" /><path d="M4 16L11 9M11 9H7M11 9V13" stroke="#d01010" /></T>
        <T><path d="M3 19V3H18" /><path d="M3 14Q4 5 14 3" stroke="#d01010" /></T>
        <T><path d="M3 19V3H18" /><path d="M4 16L15 3" stroke="#d01010" /></T>
        <T><path d="M3 18V4H14" stroke="#999" /><rect x="12" y="2" width="4" height="4" stroke="#999" /><path d="M16 6V18" stroke="#999" /></T>
        <T><path d="M2 19V9L8 3H18M6 19V11L10 7H18" stroke="#000090" /><path d="M6 6L14 14M8 4L12 8" stroke="#d01010" /></T>
        <T><rect x="1" y="7" width="18" height="6" rx="3" stroke="#999" /><path d="M4 10H16" stroke="#999" /></T>
        <T><rect x="2" y="2" width="16" height="16" stroke="#888" /><rect x="5" y="5" width="10" height="10" stroke="#888" /><rect x="8" y="8" width="4" height="4" stroke="#888" /></T>
        <T><path d="M2 2H9V8H2ZM9 12H16V19H9Z" stroke="#888" /><path d="M12 4V10M10 8L12 10L14 8" stroke="#888" /><path d="M4 4H7" stroke="#888" /></T>
        <T><path d="M2 2H9V8H2ZM9 12H15V17H9Z" stroke="#888" /><path d="M12 4V10M10 8L12 10L14 8" stroke="#888" /></T>
        <T><path d="M2 2H9V8H2Z" stroke="#888" /><rect x="11" y="14" width="3" height="3" stroke="#888" /><path d="M12 4V10M10 8L12 10L14 8" stroke="#888" /></T>
        <Grip />
        <T className="ml-[1px]"><path d="M2 2H10V10H2ZM10 12H18V19H10Z" stroke="#8a8a8a" /><path d="M8 12L12 8" stroke="#8a8a8a" /></T>
        <T><rect x="2" y="5" width="6" height="12" stroke="#8a8a8a" /><rect x="12" y="5" width="6" height="12" stroke="#8a8a8a" /><path d="M2 2H18" stroke="#8a8a8a" /></T>
        <T><path d="M10 3L16 7V13L10 17L4 13V7Z" stroke="#8a8a8a" /><circle cx="10" cy="10" r="3" stroke="#8a8a8a" /></T>
        <T><path d="M6 7H18L14 17H2Z" stroke="#8a8a8a" /><path d="M4 3H17" stroke="#8a8a8a" /></T>
        <T><rect x="2" y="6" width="16" height="12" stroke="#8a8a8a" /><rect x="2" y="6" width="16" height="5" stroke="#8a8a8a" /><path d="M4 3H17" stroke="#8a8a8a" /></T>
        <T><path d="M3 4H17M3 8H17M3 12H17M3 16H17" stroke="#8a8a8a" strokeDasharray="2 2" /></T>
        <T><path d="M2 15Q10 0 18 15" stroke="#8a8a8a" strokeDasharray="2 2" /><circle cx="10" cy="5" r="1.5" stroke="#8a8a8a" /></T>
        <T><path d="M3 3H17M4 6V14M8 6V16M12 6V14M16 6V12" stroke="#8a8a8a" strokeDasharray="2 1" /></T>
        <T><path d="M3 18Q9 15 11 9T18 3" stroke="#8a8a8a" strokeDasharray="2 2" /></T>
        <T><rect x="2" y="3" width="16" height="14" stroke="#8a8a8a" /><path d="M10 3V17M2 10H18" stroke="#8a8a8a" /></T>
        <T><rect x="3" y="4" width="14" height="12" stroke="#8a8a8a" /><path d="M10 1V19M1 10H19" stroke="#8a8a8a" /></T>
        <T on><path d="M5 4H12V11H5ZM9 9H15V16H9Z" stroke="#8a8a8a" /></T>
        <T><path d="M4 3H12V11H4ZM8 8H16V16H8Z" stroke="#8a8a8a" /></T>
        <T><path d="M3 2H17V10Q17 17 10 18Q3 17 3 10Z" fill="#8e8e8e" stroke="none" /><path d="M3 10Q10 2 17 10Z" fill="#fff" stroke="none" /></T>
        <T><path d="M3 2H17V10Q17 17 10 18Q3 17 3 10Z" fill="#969696" stroke="none" /></T>
        <Grip className="w-[8px]" />
        <T><path d="M10 4V16M4 10H16" strokeWidth="1.5" /></T>
        <T><path d="M2 4V16M18 4V16M3 10H17M3 10L6 8M3 10L6 12M17 10L14 8M17 10L14 12" /></T>
        <T><path d="M2 3V9H9V18H17M2 3H7M9 9V3M17 12V18" /><path d="M4 5L2 3L4 1M14 15L17 18" /></T>
        <T><rect x="1" y="6" width="13" height="12" /><path d="M1 2H14M1 2L3 0.5M14 2L12 0.5M17 6V18M15 8L17 6L19 8M15 16L17 18L19 16" /></T>
        <T><path d="M3 1V18H18M3 9L11 18" /><path d="M7 8Q11 10 11 14" /></T>
        <T><path d="M10 18L2 8Q2 2 10 2Q18 2 18 8Z" /><path d="M7 14L10 11L13 14M7 14L10 17L13 14" strokeWidth="1.5" /></T>
        <div className="ml-[1px] h-[31px] w-px self-start bg-[#c0c0c0]" />
      </div>
      {/* main area */}
      <div className="flex h-[891px] shrink-0">
        <LeftBar />
        <VRuler />
        <div className="flex w-[1701px] shrink-0 flex-col">
          <HRuler />
          <div className="flex h-[859px] shrink-0">
            <div className="relative h-full w-[1680px] shrink-0 overflow-hidden bg-white">
              <TileCanvas />
              <Dialog />
            </div>
            <div className="flex w-[21px] shrink-0 flex-col items-center justify-between pb-[4px] pr-[3px] pt-[5px]">
              <svg width={10} height={7} viewBox="0 0 10 7" fill="none" stroke="#a0a0a0" strokeWidth="1.5">
                <path d="M1 6L5 2L9 6" />
              </svg>
              <svg width={10} height={7} viewBox="0 0 10 7" fill="none" stroke="#a0a0a0" strokeWidth="1.5">
                <path d="M1 1L5 5L9 1" />
              </svg>
            </div>
          </div>
          <div className="flex h-[17px] shrink-0 items-center justify-between border-b border-[#c8c8c8] pl-[6px] pr-[26px]">
            <svg width={7} height={10} viewBox="0 0 7 10" fill="none" stroke="#a0a0a0" strokeWidth="1.5">
              <path d="M6 1L2 5L6 9" />
            </svg>
            <svg width={7} height={10} viewBox="0 0 7 10" fill="none" stroke="#a0a0a0" strokeWidth="1.5">
              <path d="M1 1L5 5L1 9" />
            </svg>
          </div>
        </div>
        <RightPanel />
      </div>
      {/* bottom toolbar */}
      <div className="flex h-[31px] shrink-0 items-center border-t border-[#e0e0e0] pl-[7px]">
        <T on><path d="M3 17L17 3" stroke="#222" /><circle cx="4" cy="16" r="2" fill="#666" /><circle cx="16" cy="4" r="2" fill="#666" /></T>
        <T><path d="M3 18L8 5M6 5H14M12 5L17 18" /><circle cx="10" cy="8" r="2" fill="#208080" stroke="none" /><path d="M13 6L18 1M13 6V2M13 6H17" stroke="#1010d0" /></T>
        <T on><path d="M2 4H12L16 17" /><circle cx="13" cy="6" r="2" fill="#e8a020" stroke="#700" /></T>
        <T on><path d="M2 2L18 18M18 2L2 18" strokeWidth="1.2" /><rect x="8" y="8" width="4" height="4" fill="#10b0b0" stroke="none" /></T>
        <T on><path d="M4 17V3H10Q17 4 17 14V17" /><path d="M4 16H16" strokeDasharray="1 1" /><circle cx="4" cy="17" r="2" fill="#209090" stroke="none" /></T>
        <T on><path d="M10 2L17 10L10 18L3 10Z" strokeWidth="1.2" /><circle cx="10" cy="3" r="2" fill="#d07010" stroke="#600" /><circle cx="10" cy="17" r="2" fill="#d07010" stroke="#600" /><circle cx="4" cy="10" r="1.5" fill="#d07010" stroke="#600" /><circle cx="16" cy="10" r="1.5" fill="#d07010" stroke="#600" /></T>
        <T><path d="M10 1V15M2 15H18" strokeWidth="1.2" /><circle cx="10" cy="15" r="2" fill="#108080" stroke="none" /></T>
        <T><path d="M1 6Q7 2 11 8L16 18M11 8L7 17M12 9L18 5" /><circle cx="12" cy="9" r="2" fill="#c0108a" stroke="#700" /></T>
        <Sep />
        <T on><rect x="5" y="5" width="10" height="10" rx="3" fill="#000" /><circle cx="10" cy="7.5" r="1.5" fill="#40a0ff" stroke="none" /><circle cx="10" cy="12.5" r="1.5" fill="#40a0ff" stroke="none" /></T>
        <T><path d="M10 9L3 17M10 9L17 17M10 9V15M9 3L11 3L9 6H11" /><circle cx="10" cy="9" r="1.5" fill="#e06010" stroke="none" /></T>
        <Sep />
        <T><Diamond x={6} y={8} /></T>
        <T><Diamond x={13} y={6} /></T>
        <T><Diamond x={10} y={10} /></T>
        <Sep className="ml-[3px] mr-[2px]" />
        <T><path d="M6 2V13H14M3 15H16M2 18H15" strokeWidth="1.2" /><rect x="13" y="10" width="4" height="4" fill="#e8a020" stroke="#700" /></T>
        <T><path d="M3 13H15M3 15.5H16M2 18H15" strokeWidth="1.2" /><circle cx="9" cy="10" r="2" fill="#c0108a" stroke="none" /><path d="M12 7L17 2M12 7V3M12 7H16" stroke="#1010d0" /></T>
        <Sep />
        <T><path d="M3 3V18L7 14L10 19L12 18L9 13H14Z" fill="#000" /><path d="M12 2L18 8M18 2L12 8" stroke="#d09010" /></T>
        <T><path d="M3 5V18L7 14L10 19L12 18L9 13H14Z" fill="#000" /><path d="M12 1L18 8M18 1L12 8" stroke="#d01010" strokeWidth="2" /></T>
        <Sep />
        <T><path d="M2 13L13 8L18 15L7 19Z" /><circle cx="7" cy="3" r="1.5" fill="#e8a020" stroke="#700" /><path d="M7 4V9" strokeDasharray="2 1" stroke="#777" /><path d="M14 1V7M12 5L14 7L16 5" stroke="#1010d0" /><circle cx="9" cy="14" r="2" fill="#c0108a" stroke="none" /></T>
        <T><path d="M3 17L18 2" /><circle cx="12" cy="8" r="1.5" fill="#e8a020" stroke="#700" /><circle cx="5" cy="15" r="2" fill="#c0108a" stroke="none" /><path d="M8 3V9M6 7L8 9L10 7" stroke="#1010d0" /></T>
        <T><rect x="8" y="3" width="10" height="15" fill="#eee" stroke="#666" /><path d="M10 6H16M10 9H16M10 12H16" /><circle cx="6" cy="9" r="2" fill="#f0d020" stroke="#700" /><path d="M1 4L11 14M11 4L1 14" stroke="#d09010" /></T>
        <T><path d="M4 4L16 16M16 4L4 16" stroke="#e01010" strokeWidth="3.5" /></T>
        <div className="ml-[4px] h-full w-px bg-[#b8b8b8]" />
      </div>
      {/* status bar */}
      <div className="flex h-[22px] shrink-0 items-end gap-[3px] border-t border-[#a0a0a0] pb-px">
        <div className="h-[19px] w-[1515px] shrink-0 pl-[2px] text-[14px] leading-[19px] text-[#222]">选择工具：没有选中对象</div>
        <div className="h-[19px] w-[185px] shrink-0 border border-b-0 border-[#a0a0a0] pl-[1px] text-[11.6px] leading-[19px] text-[#222] [font-family:'Liberation_Mono',monospace]">504.77 755.24 0.00</div>
        <div className="ml-[1px] flex h-[19px] w-[24px] shrink-0 items-center justify-center border border-t-white border-l-white border-r-[#666] border-b-[#666] text-[13px] text-[#888] [font-family:'Liberation_Sans',sans-serif]">U</div>
        <div className="h-[19px] w-[185px] shrink-0 border border-b-0 border-[#a0a0a0]" />
      </div>
      {/* taskbar, only its top edge is on screen */}
      <div className="flex h-[8px] shrink-0 items-start bg-[#0c0c0c] pl-[13px]">
        {taskTips.map((c, i) => (
          <div key={i} className="flex w-[36px] justify-center">
            <div className={`mt-[6px] h-[2px] w-[7px] ${c}`} />
          </div>
        ))}
        <div className="flex h-full w-[36px] justify-center bg-[#9a5a22]">
          <div className="mt-[6px] h-[2px] w-[7px] bg-[#e8d8c8]" />
        </div>
      </div>
      {/* window shadow peeking in at the top of the screen */}
      <div className="absolute left-[1209px] top-0 h-[2px] w-[283px] bg-[#c8c8c8] shadow-[0_1px_3px_rgba(0,0,0,0.35)]" />
      <Watermarks />
    </div>
  );
}
